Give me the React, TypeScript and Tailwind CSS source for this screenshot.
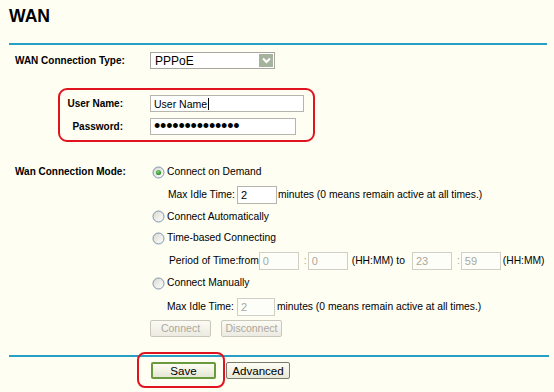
import React from "react";

function Radio({ checked, id }: { checked?: boolean; id: string }) {
  return (
    <svg width="13" height="13" viewBox="0 0 13 13" className="shrink-0">
      <defs>
        <linearGradient id={id} x1="0" y1="0" x2="1" y2="1">
          <stop offset="0" stopColor="#d9d9d0" />
          <stop offset="1" stopColor="#ffffff" />
        </linearGradient>
        <radialGradient id={id + "d"} cx="0.4" cy="0.35" r="0.7">
          <stop offset="0" stopColor="#7ad06e" />
          <stop offset="1" stopColor="#2c8c2c" />
        </radialGradient>
      </defs>
      <circle cx="6.5" cy="6.5" r="5.5" fill={`url(#${id})`} stroke="#7d94ad" strokeWidth="1" />
      {checked && <circle cx="6.5" cy="6.5" r="2.6" fill={`url(#${id}d)`} />}
    </svg>
  );
}

function TextBox({
  value,
  w,
  disabled,
}: {
  value: string;
  w: string;
  disabled?: boolean;
}) {
  return (
    <input
      readOnly
      disabled={disabled}
      value={value}
      className={
        disabled
          ? `${w} h-[18px] border border-[#cfcfc6] bg-[#fefef8] text-[#a8a8a0] text-[11px] px-[3px] outline-none`
          : `${w} h-[18px] border border-[#b5b5ae] bg-white text-black text-[11px] px-[3px] outline-none`
      }
    />
  );
}

export default function App() {
  return (
    <div className="relative w-[554px] h-[392px] overflow-hidden bg-[#fefef3] text-black font-['Liberation_Sans',Arial,sans-serif] text-[10.3px] leading-[12px]">
      <div className="h-[43px] pl-[9px] pt-[6px] text-[17.6px] leading-[20px] font-bold">WAN</div>
      <div className="ml-[9px] w-[538px] h-[2px] bg-[#2a9fc6]" />

      <div className="flex items-center mt-[7px] h-[17px]">
        <div className="w-[150px] pl-[15px] font-bold text-[10px]">WAN Connection Type:</div>
        <div className="w-[125px] h-[17px] border border-[#a7a6a0] bg-white flex items-center justify-between pl-[4px] pr-[1px]">
          <span className="text-[12px] leading-[14px]">PPPoE</span>
          <span className="w-[14px] h-[13px] bg-[#a5b39d] flex items-center justify-center">
            <svg width="9" height="7" viewBox="0 0 9 7">
              <path d="M1 1.5 L4.5 5 L8 1.5" fill="none" stroke="#ffffff" strokeWidth="2" />
            </svg>
          </span>
        </div>
      </div>

      <div className="mt-[19px] ml-[58px] w-[257px] h-[54px] border-2 border-[#e0141e] rounded-[9px] pt-[5px] flex flex-col gap-[6px]">
        <div className="flex items-center h-[17px]">
          <div className="w-[63px] text-right font-bold text-[10px]">User Name:</div>
          <div className="ml-[27px] w-[154px] h-[17px] border border-[#b5b5ae] bg-white flex items-center pl-[3px] text-[10.5px]">
            <span>User Name</span>
            <span className="ml-[1px] w-[1px] h-[12px] bg-black" />
          </div>
        </div>
        <div className="flex items-center h-[17px]">
          <div className="w-[63px] text-right font-bold text-[10px]">Password:</div>
          <div className="ml-[27px] w-[146px] h-[17px] border border-[#b5b5ae] bg-white flex items-center pl-[3px] text-[18px] leading-[17px] tracking-[-0.2px]">
            ••••••••••••••
          </div>
        </div>
      </div>

      <div className="mt-[19px] flex">
        <div className="w-[150px] pl-[15px] h-[22px] flex items-center font-bold text-[10px]">Wan Connection Mode:</div>
        <div className="flex flex-col">
          <div className="h-[22px] flex items-center pl-[2px] gap-[2px]">
            <Radio checked id="r1" />
            <span>Connect on Demand</span>
          </div>
          <div className="h-[23px] flex items-center pl-[18px]">
            <span>Max Idle Time:</span>
            <span className="ml-[2px]">
              <TextBox value="2" w="w-[40px]" />
            </span>
            <span className="ml-[1px]">minutes (0 means remain active at all times.)</span>
          </div>
          <div className="h-[21px] flex items-center pl-[2px] gap-[2px]">
            <Radio id="r2" />
            <span>Connect Automatically</span>
          </div>
          <div className="h-[22px] flex items-center pl-[2px] gap-[2px]">
            <Radio id="r3" />
            <span>Time-based Connecting</span>
          </div>
          <div className="h-[23px] flex items-center pl-[19px]">
            <span>Period of Time:from</span>
            <span className="ml-[0px]">
              <TextBox value="0" w="w-[40px]" disabled />
            </span>
            <span className="ml-[5px] text-[#a8a8a0]">:</span>
            <span className="ml-[1px]">
              <TextBox value="0" w="w-[40px]" disabled />
            </span>
            <span className="ml-[4px]">(HH:MM) to</span>
            <span className="ml-[7px]">
              <TextBox value="23" w="w-[40px]" disabled />
            </span>
            <span className="ml-[5px] text-[#a8a8a0]">:</span>
            <span className="ml-[1px]">
              <TextBox value="59" w="w-[40px]" disabled />
            </span>
            <span className="ml-[2px]">(HH:MM)</span>
          </div>
          <div className="h-[22px] flex items-center pl-[2px] gap-[2px]">
            <Radio id="r4" />
            <span>Connect Manually</span>
          </div>
          <div className="h-[26px] flex items-center pl-[17px]">
            <span>Max Idle Time:</span>
            <span className="ml-[3px]">
              <TextBox value="2" w="w-[38px]" disabled />
            </span>
            <span className="ml-[2px]">minutes (0 means remain active at all times.)</span>
          </div>
          <div className="h-[17px] flex items-center gap-[10px]">
            <button className="w-[61px] h-[17px] border border-[#cac8bb] rounded-[2px] bg-gradient-to-b from-[#fbfbf5] to-[#ecebe2] text-[#aca899] text-[10.5px] leading-[15px]">
              Connect
            </button>
            <button className="w-[61px] h-[17px] border border-[#cac8bb] rounded-[2px] bg-gradient-to-b from-[#fbfbf5] to-[#ecebe2] text-[#aca899] text-[10.5px] leading-[15px]">
              Disconnect
            </button>
          </div>
        </div>
      </div>

      <div className="mt-[18px] ml-[9px] w-[540px] h-[2px] bg-[#2a9fc6]" />

      <div className="mt-[5px] pl-[151px] flex items-center gap-[10px]">
        <button className="w-[65px] h-[17px] border-2 border-[#6a9a3e] rounded-[2px] bg-gradient-to-b from-[#fdfdf5] to-[#e6e6d4] text-[11.6px] leading-[13px] text-black">
          Save
        </button>
        <button className="w-[64px] h-[17px] border border-[#7a7a6c] rounded-[2px] bg-gradient-to-b from-[#fdfdf5] to-[#e8e8d8] text-[11.6px] leading-[15px] text-black">
          Advanced
        </button>
      </div>

      <div className="absolute left-[137px] top-[352px] w-[88px] h-[36px] border-2 border-[#e0141e] rounded-[8px]" />
    </div>
  );
}
